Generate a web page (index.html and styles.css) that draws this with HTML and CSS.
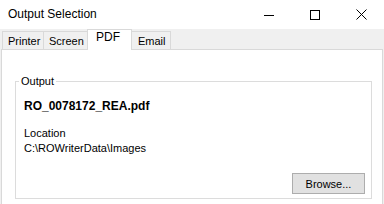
FILE: index.html
```html
<!DOCTYPE html>
<html>
<head>
<meta charset="utf-8">
<link rel="stylesheet" href="styles.css">
</head>
<body>
<div class="window">
  <div class="titlebar">
    <div class="title">Output Selection</div>
    <div class="winbtn">
      <svg width="10" height="10" viewBox="0 0 10 10"><path d="M0 5.5H10" stroke="#000" stroke-width="1"/></svg>
    </div>
    <div class="winbtn">
      <svg width="10" height="10" viewBox="0 0 10 10"><rect x="0.5" y="0.5" width="9" height="9" fill="none" stroke="#000" stroke-width="1"/></svg>
    </div>
    <div class="winbtn">
      <svg width="11" height="11" viewBox="0 0 11 11"><path d="M0.5 0.5L10.5 10.5M10.5 0.5L0.5 10.5" stroke="#000" stroke-width="1"/></svg>
    </div>
  </div>
  <div class="tabstrip">
    <div class="tab tab-printer">Printer</div>
    <div class="tab tab-screen">Screen</div>
    <div class="tab tab-pdf selected">PDF</div>
    <div class="tab tab-email">Email</div>
  </div>
  <div class="panel">
    <fieldset class="group">
      <legend class="group-title">Output</legend>
      <div class="filename">RO_0078172_REA.pdf</div>
      <div class="label">Location</div>
      <div class="label">C:\ROWriterData\Images</div>
      <div class="actions">
        <button class="btn">Browse...</button>
      </div>
    </fieldset>
  </div>
</div>
</body>
</html>
```
FILE: styles.css
```css
html, body {
  margin: 0;
  padding: 0;
}
body {
  width: 384px;
  height: 204px;
  overflow: hidden;
  background: #f0f0f0;
  font-family: "Liberation Sans", Arial, sans-serif;
  font-size: 11px;
  color: #000;
}
.window {
  display: flex;
  flex-direction: column;
  height: 204px;
}
.titlebar {
  height: 29px;
  background: #fff;
  display: flex;
  align-items: center;
  flex: none;
}
.title {
  flex: 1;
  padding-left: 8px;
  font-size: 12px;
  padding-bottom: 1px;
}
.winbtn {
  width: 46px;
  height: 29px;
  display: flex;
  align-items: center;
  justify-content: center;
}
.tabstrip {
  height: 21px;
  flex: none;
  display: flex;
  align-items: flex-end;
  padding-left: 2px;
}
.tab {
  box-sizing: border-box;
  height: 18px;
  margin-bottom: 1px;
  border: 1px solid #d9d9d9;
  border-bottom: none;
  border-right: none;
  background: #f0f0f0;
  padding-left: 5px;
  line-height: 18px;
}
.tab-printer { width: 41px; }
.tab-screen { width: 44px; padding-left: 5px; }
.tab-pdf { width: 45px; }
.tab-email { width: 39px; border-right: 1px solid #d9d9d9; padding-left: 6px; }
.tab.selected {
  position: relative;
  z-index: 1;
  height: 21px;
  margin-bottom: 0;
  background: #fff;
  border-right: 1px solid #d9d9d9;
  padding-left: 8px;
  line-height: 15px;
  font-size: 12px;
}
.tab.selected + .tab {
  border-left: none;
}
.panel {
  flex: 1;
  min-height: 0;
  margin-top: -1px;
  margin-left: 1px;
  width: 382px;
  box-sizing: border-box;
  background: #fff;
  border: 1px solid #d9d9d9;
  border-bottom: none;
  padding: 25px 10px 0 13px;
}
.group {
  margin: 0;
  height: 124px;
  box-sizing: border-box;
  border: 1px solid #dcdcdc;
  padding: 12px 6px 4px 8px;
  display: flex;
  flex-direction: column;
  min-width: 0;
}
.group-title {
  padding: 0 2px;
  margin-left: -5px;
  line-height: 12px;
  font-size: 11px;
}
.filename {
  font-weight: bold;
  font-size: 12px;
  line-height: 14px;
  margin-bottom: 13px;
}
.label {
  line-height: 15px;
}
.actions {
  margin-top: auto;
  display: flex;
  justify-content: flex-end;
}
.btn {
  width: 73px;
  height: 21px;
  margin: 0;
  padding: 0;
  background: #e1e1e1;
  border: 1px solid #adadad;
  border-radius: 0;
  font-family: "Liberation Sans", Arial, sans-serif;
  font-size: 11px;
  color: #000;
}
```
